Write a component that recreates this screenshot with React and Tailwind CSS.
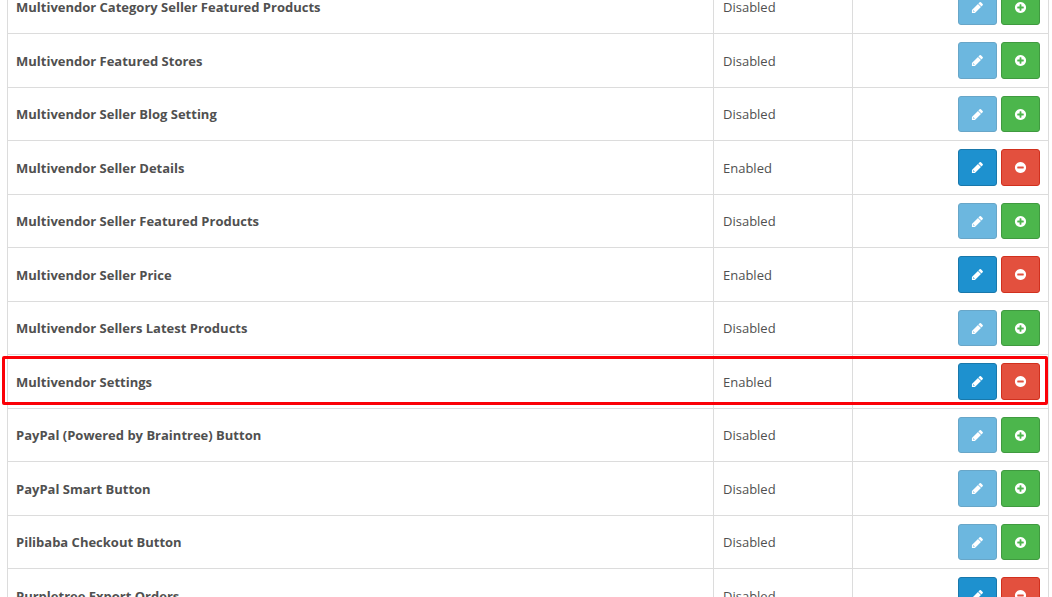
import clsx from 'clsx';

const modules = [
    { name: 'Multivendor Category Seller Featured Products', status: 'Disabled', installed: false },
    { name: 'Multivendor Featured Stores', status: 'Disabled', installed: false },
    { name: 'Multivendor Seller Blog Setting', status: 'Disabled', installed: false },
    { name: 'Multivendor Seller Details', status: 'Enabled', installed: true },
    { name: 'Multivendor Seller Featured Products', status: 'Disabled', installed: false },
    { name: 'Multivendor Seller Price', status: 'Enabled', installed: true },
    { name: 'Multivendor Sellers Latest Products', status: 'Disabled', installed: false },
    { name: 'Multivendor Settings', status: 'Enabled', installed: true, highlighted: true },
    { name: 'PayPal (Powered by Braintree) Button', status: 'Disabled', installed: false },
    { name: 'PayPal Smart Button', status: 'Disabled', installed: false },
    { name: 'Pilibaba Checkout Button', status: 'Disabled', installed: false },
    { name: 'Purpletree Export Orders', status: 'Disabled', installed: true },
];

const CIRCLE = 'M1664 896q0 209-103 385.5t-279.5 279.5-385.5 103-385.5-103-279.5-279.5-103-385.5 103-385.5 279.5-279.5 385.5-103 385.5 103 279.5 279.5 103 385.5z';

const icons = {
    pencil: 'M440 1510l50-50-175-175-50 50v75h100v100h75zM960 416l416 416-832 832h-416v-416zM1643 512q0 53-37 90l-166 166-416-416 166-165q36-38 90-38 53 0 91 38l235 234q37 39 37 91z',
    plus: CIRCLE + 'M1344 960v-128q0-26-19-45t-45-19h-256v-256q0-26-19-45t-45-19h-128q-26 0-45 19t-19 45v256h-256q-26 0-45 19t-19 45v128q0 26 19 45t45 19h256v256q0 26 19 45t45 19h128q26 0 45-19t19-45v-256h256q26 0 45-19t19-45z',
    minus: CIRCLE + 'M1344 960v-128q0-26-19-45t-45-19h-768q-26 0-45 19t-19 45v128q0 26 19 45t45 19h768q26 0 45-19t19-45z',
};

function Icon({ name }) {
    return (
        <svg viewBox="0 0 1792 1792" className="size-[13px]" fill="currentColor" fillRule="evenodd" aria-hidden="true">
            <path d={icons[name]} />
        </svg>
    );
}

function ActionButton({ icon, label, className, disabled }) {
    return (
        <button
            type="button"
            aria-label={label}
            title={label}
            disabled={disabled}
            className={clsx('flex w-[39px] items-center justify-center rounded-[3px] border text-white', className)}
        >
            <Icon name={icon} />
        </button>
    );
}

function ModuleRow({ name, status, installed, highlighted }) {
    return (
        <tr className="relative h-[53px] even:h-[54px]">
            <th scope="row" className="border-r border-b border-[#dcdcdc] px-2 text-left font-bold">
                {name}
                {highlighted && (
                    <span className="pointer-events-none absolute top-px right-px bottom-1 -left-1.5 rounded-[2px] border-3 border-[#fb0007]" />
                )}
            </th>
            <td className="border-r border-b border-[#dcdcdc] px-[9px]">{status}</td>
            <td className="h-[inherit] border-r border-b border-[#dcdcdc] p-2">
                <div className="flex h-full justify-end gap-1">
                    <ActionButton
                        icon="pencil"
                        label={`Edit ${name}`}
                        disabled={!installed}
                        className="border-[#1978ab] bg-[#1e91cf] disabled:opacity-65"
                    />
                    {installed ? (
                        <ActionButton icon="minus" label={`Uninstall ${name}`} className="border-[#d1301e] bg-[#e3503e]" />
                    ) : (
                        <ActionButton icon="plus" label={`Install ${name}`} className="border-[#409a40] bg-[#4cb64c]" />
                    )}
                </div>
            </td>
        </tr>
    );
}

export default function App() {
    return (
        <main className="h-screen overflow-hidden bg-white pr-[3px] pl-[7px] font-['Open_Sans',sans-serif] text-[13px] leading-5 text-[#505050]">
            {/* the list is scrolled a little way into its first row */}
            <table className="-mt-[19px] w-full table-fixed border-separate border-spacing-0 border-l border-[#dcdcdc]">
                <colgroup>
                    <col />
                    <col className="w-[139px]" />
                    <col className="w-[196px]" />
                </colgroup>
                <tbody>
                    {modules.map((module) => (
                        <ModuleRow key={module.name} {...module} />
                    ))}
                </tbody>
            </table>
        </main>
    );
}
